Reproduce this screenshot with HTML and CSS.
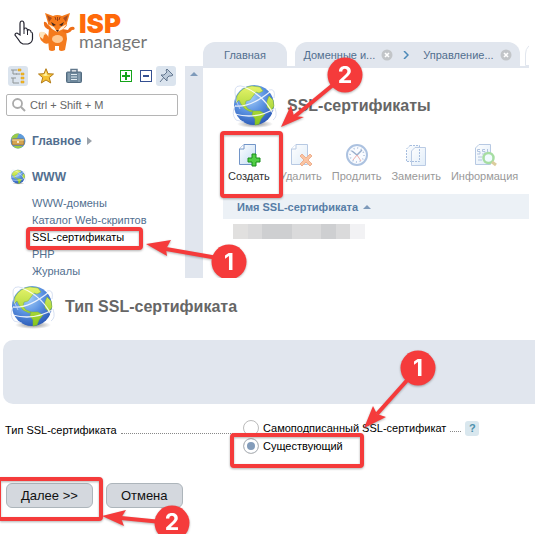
FILE: index.html
```html
<!DOCTYPE html>
<html lang="ru">
<head>
  <meta charset="UTF-8">
  <meta name="viewport" content="width=device-width, initial-scale=1.0" />
  <title>SSL-сертификаты</title>
  <link rel="stylesheet" href="styles.css">
</head>
<body>
  <!-- Shared icons -->
  <svg class="defs" width="0" height="0" aria-hidden="true">
    <defs>
      <radialGradient id="sea" cx="40%" cy="30%" r="75%">
        <stop offset="0" stop-color="#a9d2fa" />
        <stop offset=".5" stop-color="#5c93e2" />
        <stop offset="1" stop-color="#2857b4" />
      </radialGradient>
      <radialGradient id="shade">
        <stop offset="0" stop-color="#555" stop-opacity=".7" />
        <stop offset="1" stop-color="#555" stop-opacity="0" />
      </radialGradient>
      <linearGradient id="land" x1="0" y1="0" x2="0" y2="1">
        <stop offset="0" stop-color="#e6f36b" />
        <stop offset="1" stop-color="#85c51b" />
      </linearGradient>
      <linearGradient id="paper" x1="0" y1="0" x2="1" y2="1">
        <stop offset="0" stop-color="#fff" />
        <stop offset="1" stop-color="#c3dcf4" />
      </linearGradient>
      <symbol id="globe" viewBox="0 0 46 46">
        <ellipse cx="24" cy="41" rx="18" ry="4" fill="url(#shade)" />
        <circle cx="23" cy="22" r="20" fill="url(#sea)" />
        <path d="M6 13 Q11 4 21 3 L29 4 L32 8 L28 10 L25 9 L22 13 L19 17 L15 18 L14 22 L17 26 L22 28 L20 29 L14 26 L10 21 L8 17 L5 20Z M22 28 L29 28 L34 31 L30 36 L28 41 L24 42 L24 36 L21 32Z M38 13 L42 17 L43 23 L40 28 L36 24 L36 18Z" fill="url(#land)" stroke="#7fb52a" stroke-width=".5" />
        <path d="M13 4 Q35 13 44 35 M4 23 Q19 25 40 8 M4 31 Q25 37 45 25" fill="none" stroke="#fff" stroke-opacity=".85" stroke-width="1.3" />
        <path d="M14 4 Q3 0 4 10 Q4 18 9 26 M38 7 Q45 5 43 15 M44 25 Q47 34 42 37 M4 23 Q0 31 5 37 L13 39" fill="none" stroke="#cdd8ef" stroke-width=".8" />
      </symbol>
      <symbol id="close" viewBox="0 0 12 12">
        <circle cx="6" cy="6" r="5.5" fill="#c2c5c8" />
        <path d="M4 4 L8 8 M8 4 L4 8" stroke="#fff" stroke-width="1.6" />
      </symbol>
    </defs>
  </svg>

  <section class="panel">
    <aside class="sidebar">
      <div class="logo">
        <svg class="cursor" width="20" height="26" viewBox="0 0 20 26">
          <path d="M6 15 V4 Q6 1 8 1 Q10 1 10 4 V10 Q10 8 11.500 8 Q13.500 8 13.500 11 Q14 9 15.500 10 Q17 10 17 12 Q18.500 12 18.500 14 V19 Q18 23 14 24 H9 Q6 23 4 19 L1 15 Q1 13 3 13Z" fill="#fff" stroke="#23232f" stroke-width="1.200" />
          <path d="M10 10 V14 M13.500 11 V15" stroke="#23232f" />
        </svg>
        <svg class="fox" width="36" height="40" viewBox="0 0 36 40">
          <path d="M10 26 Q7 19 1 20 Q-1 27 5 31 Q8 33 12 30Z" fill="#f47b1e" />
          <path d="M1 20 Q5 19 7 22 L5 23 L4 27 L1 25Z" fill="#ffe5bd" />
          <path d="M10 17 L27 18 L28 27 L26 38 Q22 40 20 38 L20 34 L16 34 L16 38 Q13 40 10 38 L9 27Z" fill="#f47b1e" />
          <path d="M24 20 Q30 23 33 18 Q37 18 35 15 Q31 14 29 18 L23 17Z M11 18 Q4 16 5 10 Q7 9 9 13 L15 18Z" fill="#ee6e17" />
          <ellipse cx="18.500" cy="27" rx="5.500" ry="4" fill="#ffc992" />
          <path d="M6 1 L14 4 Q18 2 23 4 L31 1 L28 11 Q29 14 24 17 L18 20 L13 17 Q8 14 9 11Z" fill="#f67b1b" />
          <path d="M8 3 L13 6 L10 10Z M29 3 L24 6 L27 10Z" fill="#ac4f20" />
          <path d="M9 12 L15 15 L18 20 L13 17Z M28 12 L22 15 L18 20 L24 17Z" fill="#fff0da" />
          <path d="M12 10 L17 13 L14 14Z M25 10 L20 13 L23 14Z M17 18 H20 L18.500 20Z" fill="#43281e" />
          <path d="M18.500 5 V9 M16 5 L17 8 M21 5 L20 8" stroke="#983f18" />
        </svg>
        <div class="brand"><b>ISP</b><span>manager</span></div>
      </div>

      <div class="tools">
        <button class="tool on" aria-label="Дерево">
          <svg width="16" height="16" viewBox="0 0 16 16">
            <path d="M1 2 H7 M3 2 V6 H7 M3 12 V15 H9 M1 10 H6 M3 10 V12 M6 6 H10" fill="none" stroke="#8e9495" />
            <path d="M8 1 h3 v2 h-3z M11 5 h3 v2 h-3z M11 9 h3 v2 h-3z M11 13 h3 v2 h-3z" fill="#f4ba29" stroke="#dd9d16" stroke-width=".5" />
          </svg>
        </button>
        <button class="tool" aria-label="Избранное">
          <svg width="16" height="16" viewBox="0 0 16 16">
            <path d="M8 .7 L10 5.700 L15.500 6 L11.300 9.600 L12.700 15 L8 12 L3.300 15 L4.700 9.600 L.5 6 L6 5.700Z" fill="#f5c233" stroke="#b37b18" />
            <path d="M8 3 L9 7 L13 7 L7 8 L4 7 L7 6Z" fill="#fff3a4" />
          </svg>
        </button>
        <button class="tool" aria-label="Инструменты">
          <svg width="16" height="16" viewBox="0 0 16 16">
            <path d="M5 4 V1.500 H11 V4" fill="none" stroke="#62788c" stroke-width="1.500" />
            <rect x=".5" y="4" width="15" height="10.500" rx="1" fill="#6d879b" stroke="#526b80" />
            <path d="M3 5 V14 M13 5 V14" stroke="#9eb2c1" />
            <path d="M5 6.500 H11 M5 9 H11 M5 11.500 H11" stroke="#e2edf3" />
          </svg>
        </button>
        <span class="spacer"></span>
        <button class="square green" aria-label="Развернуть"><svg width="8" height="8" viewBox="0 0 8 8"><path d="M4 0 V8 M0 4 H8" stroke="#14a419" stroke-width="2" /></svg></button>
        <button class="square" aria-label="Свернуть"><svg width="8" height="8" viewBox="0 0 8 8"><path d="M1 4 H7" stroke="#344f91" stroke-width="2" /></svg></button>
        <button class="tool on" aria-label="Закрепить">
          <svg width="16" height="16" viewBox="0 0 16 16">
            <path d="M7 8 L2 14" stroke="#61758e" />
            <path d="M9 1 L15 7 L13 8 L11 8 L9 10 L9 13 L3 7 L6 7 L9 4 L8 2Z" fill="#bdcbda" stroke="#62768f" />
          </svg>
        </button>
      </div>

      <label class="search">
        <svg width="14" height="14" viewBox="0 0 14 14"><circle cx="5.500" cy="5.500" r="4.500" fill="none" stroke="#aaa" stroke-width="1.800" /><path d="M9 9 L13 13" stroke="#aaa" stroke-width="2" /></svg>
        <input type="text" placeholder="Ctrl + Shift + M" aria-label="Поиск">
      </label>

      <nav class="menu">
        <h3>
          <svg width="16" height="16" viewBox="0 0 16 16"><circle cx="8" cy="8" r="7.500" fill="#5e9bdb" /><path d="M1 6 Q3 0 9 .5 L7 5Z M3 13 H13 Q8 18 3 13Z" fill="#9acb48" /><rect x="2" y="6" width="12" height="6" rx="1" fill="#d5a451" stroke="#8e642d" stroke-width=".7" /><path d="M2 7 H14" stroke="#f9e29d" /><circle cx="8" cy="9" r="1" fill="#fff" /></svg>
          <a href="#">Главное</a><i class="arrow-right"></i>
        </h3>
        <h3>
          <svg width="16" height="16"><use href="#globe" /></svg>
          <a href="#">WWW</a>
        </h3>
        <ul>
          <li><a href="#">WWW-домены</a></li>
          <li><a href="#">Каталог Web-скриптов</a></li>
          <li><a class="current" href="#">SSL-сертификаты</a></li>
          <li><a href="#">PHP</a></li>
          <li><a href="#">Журналы</a></li>
        </ul>
      </nav>
    </aside>

    <div class="scroll"><i class="arrow-up"></i></div>

    <main class="content">
      <div class="tabs">
        <a class="tab" href="#">Главная</a>
        <div class="tab wide">
          <a href="#">Доменные и...</a>
          <svg width="12" height="12"><use href="#close" /></svg>
          <svg class="next" width="6" height="8" viewBox="0 0 6 8"><path d="M1 0 L5 4 L1 8" fill="none" stroke="#4b89b8" stroke-width="1.500" /></svg>
          <a href="#">Управление...</a>
          <svg width="12" height="12"><use href="#close" /></svg>
        </div>
        <span class="tab active"></span>
      </div>

      <header class="heading">
        <svg width="46" height="46"><use href="#globe" /></svg>
        <h1>SSL-сертификаты</h1>
      </header>

      <div class="actions">
        <button>
          <svg width="24" height="24" viewBox="0 0 24 24">
            <path d="M7 1.500 H18.500 V21.500 H2.500 V6Z" fill="url(#paper)" stroke="#7295c8" />
            <path d="M2.500 6 H7 V1.500" fill="#fff" stroke="#7295c8" />
            <path d="M15 11 H19 V15 H23 V19 H19 V23 H15 V19 H11 V15 H15Z" fill="#52ce45" stroke="#168c1b" />
          </svg>
          Создать
        </button>
        <button disabled>
          <svg width="24" height="24" viewBox="0 0 24 24">
            <path d="M7 1.500 H18.500 V21.500 H2.500 V6Z" fill="url(#paper)" stroke="#7295c8" />
            <path d="M2.500 6 H7 V1.500" fill="#fff" stroke="#7295c8" />
            <path d="M13 11 L17 15 L21 11 L23 13 L19 17 L23 21 L21 23 L17 19 L13 23 L11 21 L15 17 L11 13Z" fill="#f78b47" stroke="#dc6424" />
          </svg>
          Удалить
        </button>
        <button disabled>
          <svg width="24" height="24" viewBox="0 0 24 24">
            <circle cx="12" cy="12" r="10" fill="#f4f8ff" stroke="#5c87c3" stroke-width="2" />
            <circle cx="12" cy="12" r="7" fill="none" stroke="#557db4" stroke-width="1.500" stroke-dasharray="1 2.665" />
            <path d="M7 8 L12 12 L17 7" fill="none" stroke="#365f9a" stroke-width="1.500" /><path d="M12 12 L16 18 M12 12 L8 17" stroke="#d96058" />
          </svg>
          Продлить
        </button>
        <button disabled>
          <svg width="24" height="24" viewBox="0 0 24 24">
            <path d="M6 2.500 H15.500 V18.500 H2.500 V6Z" fill="url(#paper)" stroke="#517fc0" stroke-dasharray="2 1" />
            <path d="M11 4.500 H21.500 V22.500 H7.500 V8Z" fill="url(#paper)" stroke="#7899cb" />
            <path d="M8 18.500 H15.500 V6" fill="none" stroke="#517fc0" stroke-dasharray="2 1" />
          </svg>
          Заменить
        </button>
        <button disabled>
          <svg width="24" height="24" viewBox="0 0 24 24">
            <path d="M6 1.500 H17.500 V21.500 H2.500 V5Z" fill="url(#paper)" stroke="#7295c8" />
            <path d="M7 6.500 H4.500 V8.500 H7 V11 H4 M12 6.500 H9.500 V8.500 H12 V11 H9 M14.500 6 V9 M5 14 H9 M5 17 H9" fill="none" stroke="#668ac0" />
            <circle cx="15.500" cy="15" r="5" fill="#e3f8ff" stroke="#50bd48" stroke-width="2.500" />
            <path d="M19 19 L23 22" stroke="#b99c3e" stroke-width="3" />
          </svg>
          Информация
        </button>
      </div>

      <table class="list">
        <thead><tr><th>Имя SSL-сертификата <i class="arrow-up"></i></th></tr></thead>
        <tbody><tr><td><div class="mosaic"><i></i><i></i><i></i><i></i><i></i><i></i><i></i><i></i><i></i></div></td></tr></tbody>
      </table>
    </main>

    <!-- Step marks over the list page -->
    <svg class="marks" width="540" height="278" viewBox="0 0 540 278">
      <rect x="28" y="229" width="113" height="19" rx="2" />
      <rect x="222" y="133" width="59" height="63" rx="2" />
      <path class="line" d="M166 249 L229 260 M294 117 L345 75" />
      <path class="tip" d="M146 244 L171 240 L166 249 L167 256Z M281 127 L291 105 L294 116 L304 117Z" />
      <circle cx="229" cy="262" r="17.500" /><text x="229" y="270">1</text>
      <circle cx="345" cy="75" r="17.500" /><text x="345" y="83">2</text>
    </svg>
  </section>

  <section class="panel form-panel">
    <header class="heading">
      <svg width="46" height="46"><use href="#globe" /></svg>
      <h1>Тип SSL-сертификата</h1>
    </header>
    <div class="band"></div>
    <form>
      <fieldset>
        <div class="caption"><span id="type-label">Тип SSL-сертификата</span><i class="dots"></i></div>
        <div class="options" role="radiogroup" aria-labelledby="type-label">
          <div class="option">
            <label><input type="radio" name="type">Самоподписанный SSL-сертификат</label>
            <i class="dots"></i>
            <button type="button" class="help">?</button>
          </div>
          <div class="option">
            <label><input type="radio" name="type" checked>Существующий</label>
          </div>
        </div>
      </fieldset>
      <div class="buttons">
        <button type="button">Далее &gt;&gt;</button>
        <button type="button">Отмена</button>
      </div>
    </form>

    <!-- Step marks over the form -->
    <svg class="marks" width="540" height="256" viewBox="0 0 540 256">
      <rect x="232" y="157" width="130" height="31" rx="2" />
      <rect x="-1" y="201" width="102" height="40" rx="2" />
      <path class="line" d="M377 136 L418 90 M121 240 L172 245" />
      <path class="tip" d="M364 150 L373 128 L377 136 L386 139Z M102 238 L126 232 L121 240 L124 248Z" />
      <circle cx="418" cy="90" r="17.500" /><text x="418" y="98">1</text>
      <circle cx="172" cy="245" r="17.500" /><text x="172" y="252">2</text>
    </svg>
  </section>
</body>
</html>
```

FILE: styles.css
```css
* {
    padding: 0;
    margin: 0;
    box-sizing: border-box;
}

body {
    background-color: #ffffff;
    font-family: "Liberation Sans", Arial, sans-serif;
    font-size: 11px;
    color: #000000;
}

a {
    color: inherit;
    text-decoration: none;
}

button {
    font-family: inherit;
    border: none;
    background: none;
    cursor: pointer;
}

svg {
    display: block;
    flex-shrink: 0;
}

.defs {
    position: absolute;
}

.panel {
    position: relative;
    display: grid;
    grid-template-columns: 185px 18px 1fr;
    height: 278px;
    padding-right: 13px;
    overflow: hidden;
}

/* Sidebar */
.sidebar {
    padding: 12px 7px 0 6px;
}

.logo {
    display: flex;
    height: 54px;
}

.cursor {
    margin: 8px 5px 0 8px;
}

.brand {
    display: flex;
    flex-direction: column;
    margin-left: 4px;
}

.brand b {
    font-family: Inter, sans-serif;
    font-size: 26px;
    line-height: 23px;
    font-weight: 900;
    color: #ff6a0a;
}

.brand span {
    font-family: Lato, sans-serif;
    font-size: 18px;
    line-height: 12px;
    color: #777777;
}

.tools {
    display: flex;
    align-items: center;
    gap: 8px;
    height: 20px;
    margin: 0 2px;
}

.tool {
    display: flex;
    align-items: center;
    justify-content: center;
    width: 20px;
    height: 20px;
    border-radius: 3px;
}

.tool.on {
    background-color: #dbe4ee;
}

.spacer {
    flex: 1;
}

.square {
    display: flex;
    align-items: center;
    justify-content: center;
    width: 12px;
    height: 12px;
    border: 1px solid #344f91;
}

.square.green {
    border-color: #14a419;
}

.square + .tool {
    margin-left: -4px;
}

.search {
    display: flex;
    align-items: center;
    gap: 4px;
    height: 22px;
    margin-top: 8px;
    padding: 0 5px;
    border: 1px solid #b5b5b5;
    border-radius: 2px;
}

.search input {
    width: 100%;
    min-width: 0;
    border: none;
    outline: none;
    font: 11px "Liberation Sans", Arial, sans-serif;
}

.search input::placeholder {
    color: #666666;
}

.menu {
    padding: 17px 0 0 4px;
    color: #526f8f;
}

.menu h3 {
    display: flex;
    align-items: center;
    gap: 6px;
    height: 16px;
    margin-bottom: 20px;
    font-size: 12px;
}

.menu ul {
    margin: -10px 0 0 22px;
    list-style: none;
}

.menu li {
    height: 17px;
    line-height: 17px;
    white-space: nowrap;
}

.menu .current {
    color: #000000;
}

.arrow-right {
    border: 4px solid transparent;
    border-left: 5px solid #9ba2aa;
    border-right: none;
}

.arrow-up {
    display: inline-block;
    border: 4px solid transparent;
    border-bottom-color: #7e9aba;
    border-top: none;
}

.scroll {
    margin-top: 66px;
    text-align: center;
    background-color: #e1e6ee;
}

/* Content */
.content {
    min-width: 0;
    padding-top: 42px;
}

.tabs {
    display: flex;
    gap: 8px;
    height: 26px;
    border-bottom: 2px solid #e1e6ee;
    overflow: hidden;
}

.tab {
    flex-shrink: 0;
    display: flex;
    align-items: center;
    justify-content: center;
    width: 84px;
    padding-top: 2px;
    border-radius: 12px 12px 0 0;
    background-color: #e1e6ee;
    color: #526f8f;
    white-space: nowrap;
}

.tab.wide {
    width: 225px;
    gap: 6px;
}

.tab .next {
    margin: 0 8px 0 4px;
}

.tab.active {
    margin-left: -3px;
    border: 1px solid #e1e6ee;
    background-color: #ffffff;
}

.heading {
    display: flex;
    align-items: center;
    gap: 10px;
}

.heading h1 {
    font-size: 16px;
    color: #666666;
}

.content .heading {
    padding: 15px 0 0 28px;
}

.actions {
    display: flex;
    gap: 10px;
    padding: 14px 0 0 25px;
}

.actions button {
    display: flex;
    flex-direction: column;
    align-items: center;
    gap: 1px;
    font-size: 11px;
    line-height: 16px;
    color: #333333;
}

.actions button:disabled {
    color: #999999;
}

.actions button:disabled svg {
    opacity: 0.5;
}

.list {
    width: calc(100% - 20px);
    margin: 10px 0 0 20px;
    border-collapse: collapse;
}

.list th {
    height: 25px;
    padding-left: 14px;
    background-color: #ecf1f6;
    color: #577da6;
    text-align: left;
}

.list th .arrow-up {
    margin: 0 0 2px 2px;
}

.list td {
    padding: 5px 10px;
}

.mosaic {
    display: grid;
    grid-template-columns: repeat(9, 1fr);
    width: 132px;
    height: 15px;
}

.mosaic i {
    background-color: #dadadb;
}

.mosaic i:nth-child(1) {
    background-color: #e1e0df;
}

.mosaic i:nth-child(3),
.mosaic i:nth-child(4),
.mosaic i:nth-child(7) {
    background-color: #cecfd1;
}

.mosaic i:last-child {
    background-color: #f2f2f4;
}

/* Form */
.form-panel {
    display: block;
    height: 256px;
    padding: 6px 7px 0 3px;
}

.form-panel .heading {
    padding-left: 6px;
}

.band {
    height: 64px;
    margin-top: 10px;
    border-radius: 10px 0 0 10px;
    background-color: #e1e6ee;
}

fieldset {
    display: flex;
    margin-top: 15px;
    padding-left: 2px;
    border: none;
}

.caption {
    display: flex;
    align-items: center;
    width: 238px;
    height: 22px;
    gap: 4px;
}

.dots {
    flex: 1;
    height: 8px;
    border-bottom: 1px dotted #888888;
}

.option {
    display: flex;
    align-items: center;
    height: 18px;
    gap: 4px;
}

.option label {
    display: flex;
    align-items: center;
    gap: 4px;
}

.option .dots {
    flex: none;
    width: 11px;
}

.option input {
    appearance: none;
    width: 16px;
    height: 16px;
    border: 1px solid #bbbbbb;
    border-radius: 50%;
    background-color: #ffffff;
}

.option input:checked {
    background-color: #839cba;
    box-shadow: inset 0 0 0 3px #ffffff;
}

.help {
    width: 14px;
    height: 15px;
    border-radius: 3px;
    background-color: #d9e7ee;
    color: #4d91ad;
    font-size: 11px;
    font-weight: bold;
}

.buttons {
    display: flex;
    gap: 13px;
    margin: 28px 0 0 3px;
}

.buttons button {
    height: 25px;
    padding: 0 14px;
    border: 1px solid #adb5bb;
    border-radius: 6px;
    background-color: #d4d8de;
    font-size: 13px;
    color: #111111;
}

/* Step marks */
.marks {
    position: absolute;
    top: 0;
    left: 0;
    pointer-events: none;
    filter: drop-shadow(0 1px 1px rgba(0, 0, 0, 0.3));
}

.marks rect {
    fill: none;
    stroke: #f53b3b;
    stroke-width: 4px;
}

.marks .line {
    stroke: #f53b3b;
    stroke-width: 4px;
}

.marks .tip,
.marks circle {
    fill: #f53b3b;
}

.marks text {
    fill: #ffffff;
    font-family: Inter, sans-serif;
    font-size: 23px;
    font-weight: bold;
    text-anchor: middle;
}
```
